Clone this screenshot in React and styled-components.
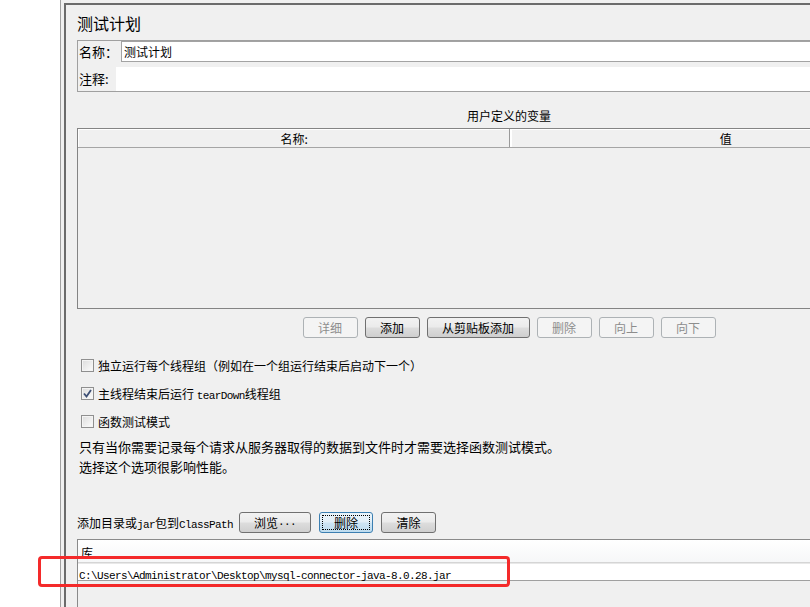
import React from 'react';
import styled, { createGlobalStyle, css } from 'styled-components';

const GlobalStyle = createGlobalStyle`
    html, body {
        margin: 0;
        padding: 0;
        background: #f0f0f0;
    }
    body {
        font-family: "Noto Sans CJK SC", "Liberation Sans", sans-serif;
        color: #000;
    }
`;

const cjk = `"Noto Sans CJK SC", "Liberation Sans", sans-serif`;

const Frame = styled.div`
    position: relative;
    display: flex;
    width: 810px;
    height: 607px;
    overflow: hidden;
    background: #f0f0f0;
`;

const TreePane = styled.div`
    flex: 0 0 60px;
    background: #fff;
    border-right: 1px solid #a0a0a0;
`;

const Editor = styled.div`
    flex: 1 0 auto;
    margin: 3px 0 0 3px;
    border-top: 2px solid #6b6b6b;
    border-left: 2px solid #6b6b6b;
    padding-left: 11px;
`;

const Content = styled.div`
    width: 864px;
    display: flex;
    flex-direction: column;
`;

const Title = styled.div`
    margin-top: 8px;
    font-size: 16px;
    line-height: 20px;
    height: 20px;
`;

const NameBox = styled.div`
    margin-top: 7px;
    border: 1px solid #a0a0a0;
    border-right: none;
    display: flex;
    flex-direction: column;
    gap: 5px;
`;

const FieldRow = styled.div`
    display: flex;
    align-items: center;
    height: ${p => p.$h}px;
`;

const FieldLabel = styled.div`
    width: ${p => p.$w}px;
    padding-left: 1px;
    font-size: 13px;
    line-height: 16px;
    flex: 0 0 auto;
`;

const TextInput = styled.div`
    flex: 1;
    height: 100%;
    box-sizing: border-box;
    background: #fff;
    border: ${p => (p.$bordered ? '1px solid #a3a3a3' : 'none')};
    border-right: none;
    font-size: 12px;
    line-height: 19px;
    padding-left: 2px;
`;

const SectionTitle = styled.div`
    margin-top: 16px;
    text-align: center;
    font-size: 12px;
    line-height: 16px;
    height: 16px;
`;

const Table = styled.div`
    margin-top: 4px;
    height: 181px;
    box-sizing: border-box;
    border: 1px solid #848484;
    border-right: none;
    display: flex;
    flex-direction: column;
`;

const HeaderRow = styled.div`
    display: flex;
    height: 19px;
    box-sizing: border-box;
    border-bottom: 1px solid #a5a5a5;
    background: #f0f0f0;
`;

const HeaderCell = styled.div`
    flex: 1;
    text-align: center;
    font-size: 12px;
    line-height: 18px;
    border-top: 1px solid #fff;
    border-left: 1px solid #fff;
    ${p => p.$divider && css`
        box-shadow: inset 1px 0 0 #fff, -1px 0 0 #9a9a9a;
    `}
`;

const TableBody = styled.div`
    flex: 1;
    background: #f0f0f0;
`;

const ButtonBar = styled.div`
    margin-top: 8px;
    display: flex;
    justify-content: center;
    gap: 7px;
`;

const Button = styled.button`
    height: 21px;
    width: ${p => p.$w}px;
    padding: 0;
    box-sizing: border-box;
    font-family: ${cjk};
    font-size: 12px;
    line-height: 17px;
    border-radius: 3px;
    color: #000;
    border: 1px solid #707070;
    background: linear-gradient(#f2f2f2 0%, #ebebeb 48%, #dddddd 52%, #cfcfcf 100%);
    display: flex;
    align-items: center;
    justify-content: center;
    ${p => p.disabled && css`
        color: #8d8d8d;
        border-color: #adb2b5;
        background: #f4f4f4;
    `}
    ${p => p.$focused && css`
        border-color: #3c7fb1;
        background: linear-gradient(#eaf4fa 0%, #e1eef7 48%, #cde4f3 52%, #bedcef 100%);
    `}
`;

const FocusRing = styled.span`
    display: flex;
    align-items: center;
    justify-content: center;
    width: calc(100% - 6px);
    height: 13px;
    border: 1px dotted #000;
`;

const Options = styled.div`
    margin-top: 13px;
    display: flex;
    flex-direction: column;
`;

const OptionRow = styled.label`
    height: 28px;
    display: flex;
    align-items: center;
    padding-left: 4px;
    gap: 4px;
    font-size: 12px;
`;

const Box = styled.span`
    width: 13px;
    height: 13px;
    box-sizing: border-box;
    border: 1px solid #8f8f8f;
    background: linear-gradient(135deg, #dcdcdc, #fdfdfd);
    box-shadow: inset 0 0 0 1px #f4f4f4;
    display: flex;
    align-items: center;
    justify-content: center;
`;

const Mono = styled.span`
    font-family: "Liberation Mono", "DejaVu Sans Mono", monospace;
    font-size: 11px;
    letter-spacing: -0.6px;
`;

const Note = styled.div`
    margin-top: 2px;
    padding-left: 2px;
    font-size: 13px;
    line-height: 20px;
`;

const ClassPathBar = styled.div`
    margin-top: 35px;
    display: flex;
    align-items: center;
    gap: 8px;
`;

const ClassPathLabel = styled.div`
    font-size: 12px;
    margin-right: -2px;
    width: 156px;
    white-space: nowrap;
`;

const LibTable = styled.div`
    margin-top: 6px;
    height: 80px;
    border-top: 1px solid #8a8a8a;
    border-left: 1px solid #8a8a8a;
    display: flex;
    flex-direction: column;
`;

const LibHeader = styled.div`
    height: 23px;
    box-sizing: border-box;
    background: linear-gradient(#ffffff, #f6f7f8);
    border-bottom: 1px solid #d5d5d5;
    font-size: 12px;
    line-height: 26px;
    padding-left: 3px;
`;

const LibRow = styled.div`
    height: 18px;
    box-sizing: border-box;
    background: #fff;
    border-top: 1px solid #e8e8e8;
    border-bottom: 1px solid #a0a0a0;
    line-height: 16px;
    padding-left: 1px;
`;

const Highlight = styled.div`
    position: absolute;
    left: 38px;
    top: 556px;
    width: 472px;
    height: 31px;
    box-sizing: border-box;
    border: 3px solid #f42a2a;
    border-radius: 4px;
    pointer-events: none;
`;

const Check = ({ checked }) => (
    <Box>
        {checked && (
            <svg width="9" height="9" viewBox="0 0 9 9">
                <path d="M1 4.5 L3.5 7.5 L8 1" fill="none" stroke="#3d4f75" strokeWidth="1.8" />
            </svg>
        )}
    </Box>
);

const App = () => {
    const varButtons = [
        { t: '详细', w: 55, off: true },
        { t: '添加', w: 55 },
        { t: '从剪贴板添加', w: 103 },
        { t: '删除', w: 55, off: true },
        { t: '向上', w: 55, off: true },
        { t: '向下', w: 55, off: true },
    ];

    return (
        <>
            <GlobalStyle />
            <Frame>
                <TreePane />
                <Editor>
                    <Content>
                        <Title>测试计划</Title>
                        <NameBox>
                            <FieldRow $h={21}>
                                <FieldLabel $w={42}>名称：</FieldLabel>
                                <TextInput $bordered>测试计划</TextInput>
                            </FieldRow>
                            <FieldRow $h={24}>
                                <FieldLabel $w={37}>注释:</FieldLabel>
                                <TextInput />
                            </FieldRow>
                        </NameBox>

                        <SectionTitle>用户定义的变量</SectionTitle>
                        <Table>
                            <HeaderRow>
                                <HeaderCell>名称:</HeaderCell>
                                <HeaderCell $divider>值</HeaderCell>
                            </HeaderRow>
                            <TableBody />
                        </Table>
                        <ButtonBar>
                            {varButtons.map(b => (
                                <Button key={b.t} $w={b.w} disabled={b.off}>{b.t}</Button>
                            ))}
                        </ButtonBar>

                        <Options>
                            <OptionRow>
                                <Check />
                                独立运行每个线程组（例如在一个组运行结束后启动下一个）
                            </OptionRow>
                            <OptionRow>
                                <Check checked />
                                <span>主线程结束后运行 <Mono>tearDown</Mono>线程组</span>
                            </OptionRow>
                            <OptionRow>
                                <Check />
                                函数测试模式
                            </OptionRow>
                        </Options>

                        <Note>
                            只有当你需要记录每个请求从服务器取得的数据到文件时才需要选择函数测试模式。<br />
                            选择这个选项很影响性能。
                        </Note>

                        <ClassPathBar>
                            <ClassPathLabel>添加目录或<Mono>jar</Mono>包到<Mono>ClassPath</Mono></ClassPathLabel>
                            <Button $w={72}>浏览<Mono>...</Mono></Button>
                            <Button $w={54} $focused><FocusRing>删除</FocusRing></Button>
                            <Button $w={55}>清除</Button>
                        </ClassPathBar>
                        <LibTable>
                            <LibHeader>库</LibHeader>
                            <LibRow>
                                <Mono>C:\Users\Administrator\Desktop\mysql-connector-java-8.0.28.jar</Mono>
                            </LibRow>
                        </LibTable>
                    </Content>
                </Editor>
                <Highlight />
            </Frame>
        </>
    );
};

export default App;
